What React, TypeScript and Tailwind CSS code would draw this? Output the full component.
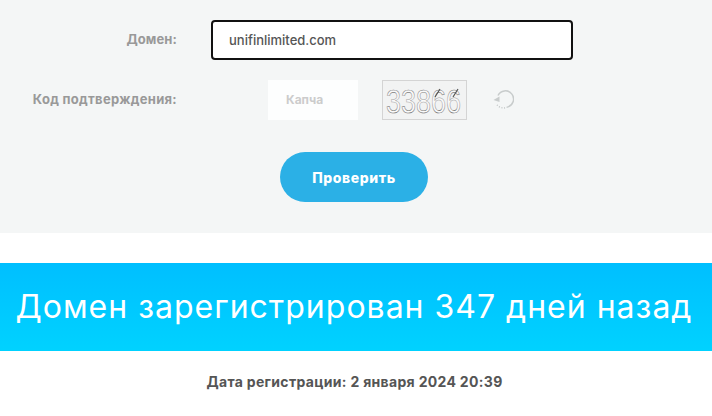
export default function App() {
  const font = "font-['Inter','Liberation_Sans',sans-serif]";
  return (
    <div className={`w-[712px] h-[416px] overflow-hidden bg-white ${font}`}>
      <section className="h-[233px] bg-[#f4f6f6] pt-5">
        <div className="flex items-center h-10">
          <label className="w-[178px] pr-px text-right text-[13px] font-bold text-[#999] tracking-[0.1px]">Домен:</label>
          <input
            readOnly
            value="unifinlimited.com"
            className="ml-[33px] w-[362px] h-10 bg-white border-2 border-[#111] rounded-[4px] pl-[16px] text-[13px] font-medium text-[#555] outline-none"
          />
        </div>
        <div className="flex items-center h-10 mt-5">
          <label className="w-[178px] pr-px text-right text-[13px] font-bold text-[#999] tracking-[0.3px]">Код подтверждения:</label>
          <div className="ml-[90px] w-[90px] h-10 bg-[#fdfefe] flex items-center pl-[18px] text-[12px] font-bold text-[#ccc]">Капча</div>
          <div className="ml-6 w-[85px] h-10 border border-[#d4d4d4] bg-[#f2f3f3] flex items-center justify-center overflow-hidden">
            <svg width="83" height="38" viewBox="0 0 83 38">
              <defs>
                <linearGradient id="cap" x1="0" y1="0" x2="0" y2="1">
                  <stop offset="0" stopColor="#555" />
                  <stop offset="0.5" stopColor="#aaa" />
                  <stop offset="1" stopColor="#444" />
                </linearGradient>
              </defs>
              <text
                transform="translate(3 32) scale(1 1.22)"
                fontFamily="'Liberation Sans', sans-serif"
                fontSize="27"
                fill="#fafafa"
                stroke="url(#cap)"
                strokeWidth="0.5"
              >
                33866
              </text>
              <path d="M57 8 L52 16 M75 8 L70 16" stroke="#555" strokeWidth="1.2" fill="none" />
            </svg>
          </div>
          <svg className="ml-[25px]" width="22" height="22" viewBox="0 0 22 22" fill="none">
            <path d="M6 6.5 A8.2 8.2 0 1 1 15.5 18" stroke="#c8cccc" strokeWidth="1.5" />
            <path d="M15.5 18 A8.2 8.2 0 0 1 4.5 15" stroke="#bfc3c3" strokeWidth="1.3" strokeDasharray="1 1.6" />
            <path d="M1.5 11 L7.5 7.5 L7.5 13 Z" fill="#c8cccc" />
          </svg>
        </div>
        <div className="flex justify-center mt-8">
          <button className="ml-[-4px] w-[148px] h-[50px] rounded-full bg-[#2bb0e6] text-white text-[14px] tracking-[0.6px] font-extrabold">Проверить</button>
        </div>
      </section>
      <section className="mt-[30px] h-[88px] bg-gradient-to-b from-[#00bfff] to-[#00d2ff] flex items-center justify-center pr-1">
        <h1 className="text-[32px] tracking-[1px] font-normal text-white whitespace-nowrap">Домен зарегистрирован 347 дней назад</h1>
      </section>
      <p className="mt-[22px] pr-[3px] text-center text-[14px] tracking-[0.32px] leading-[18px] font-bold text-[#555]">Дата регистрации: 2 января 2024 20:39</p>
    </div>
  );
}
